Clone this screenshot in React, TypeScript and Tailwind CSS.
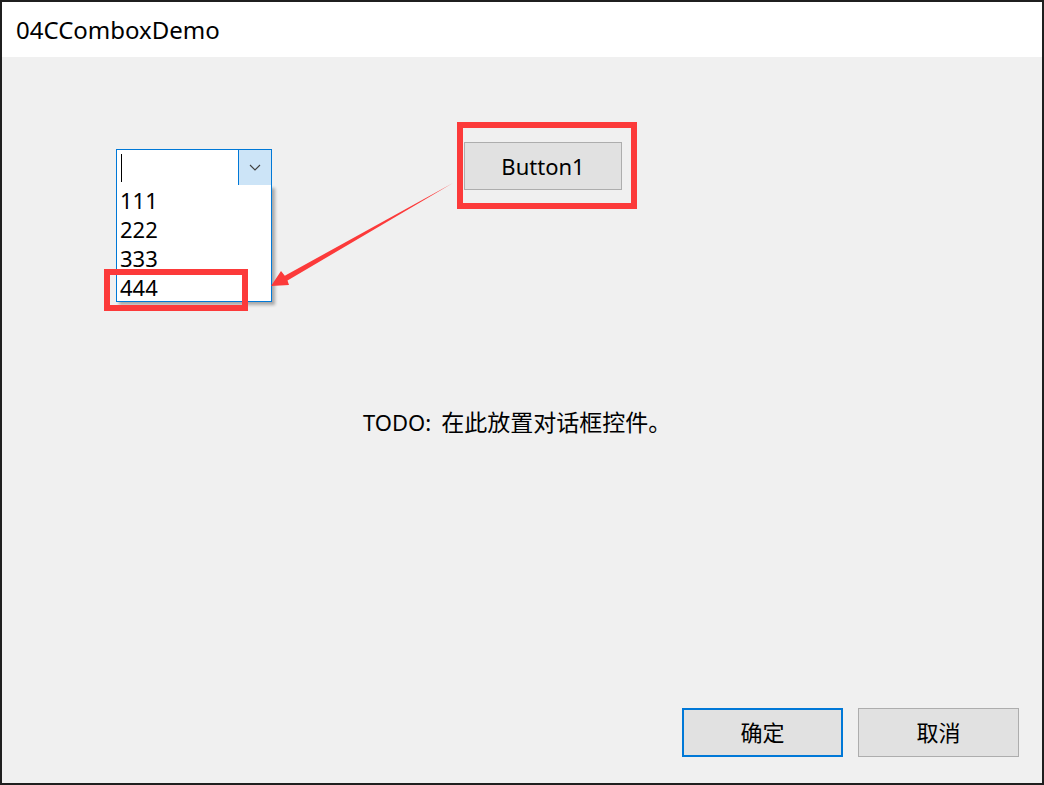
// Win32 dialog "04CComboxDemo" with open combo box and red annotations

const font = { fontFamily: '"Noto Sans", "Noto Sans CJK SC", sans-serif' };

function ComboBox() {
  return (
    <div className="relative mt-[7px] w-[156px]">
      {/* edit + drop button */}
      <div className="flex h-[37px] border border-[#0078d7] bg-white">
        <div className="flex flex-1 items-center pl-[4px]">
          <div className="h-[28px] w-px bg-black" />
        </div>
        <div className="flex w-[33px] items-center justify-center border-l border-[#0078d7] bg-[#cce4f7]">
          <svg width="12" height="7" viewBox="0 0 12 7">
            <path d="M1 1 L6 6 L11 1" fill="none" stroke="#404040" strokeWidth="1.1" />
          </svg>
        </div>
      </div>
      {/* open list */}
      <div className="absolute left-0 top-[36px] w-[156px] border border-t-0 border-[#0078d7] bg-white shadow-[3px_3px_3px_rgba(0,0,0,0.3)]">
        {['111', '222', '333', '444'].map((v) => (
          <div key={v} className="flex h-[29px] items-center pl-[3px] text-[22px] leading-none text-black">
            {v}
          </div>
        ))}
      </div>
    </div>
  );
}

export default function App() {
  return (
    <div className="relative flex h-[785px] w-[1044px] flex-col bg-[#1f1f1f] p-[2px]" style={font}>
      {/* Title bar */}
      <div className="flex h-[55px] items-center bg-white pl-[14px] text-[24px] text-black">
        04CComboxDemo
      </div>

      {/* Client area */}
      <div className="flex flex-1 flex-col bg-[#f0f0f0]">
        <div className="flex items-start pl-[114px] pt-[85px]">
          <ComboBox />
          <button className="ml-[192px] flex h-[48px] w-[158px] items-center justify-center border border-[#adadad] bg-[#e1e1e1] text-[22px] text-black">
            Button1
          </button>
        </div>

        <div className="mt-[217px] flex items-center pl-[361px] text-[22px] leading-[30px] text-black">
          <span>TODO:</span>
          <span className="ml-[10px] text-[23px]">在此放置对话框控件。</span>
        </div>

        <div className="flex-1" />

        <div className="flex justify-end gap-[15px] pb-[26px] pr-[23px]">
          <button className="flex h-[49px] w-[161px] items-center justify-center border-2 border-[#0078d7] bg-[#e1e1e1] text-[22px] text-black">
            确定
          </button>
          <button className="flex h-[49px] w-[161px] items-center justify-center border border-[#adadad] bg-[#e1e1e1] text-[22px] text-black">
            取消
          </button>
        </div>
      </div>

      {/* Annotations */}
      <div className="pointer-events-none absolute left-[457px] top-[122px] h-[87px] w-[180px] border-[6px] border-[#fc3a3a]" />
      <div className="pointer-events-none absolute left-[104px] top-[269px] h-[42px] w-[144px] border-[6px] border-[#fc3a3a]" />
      <svg className="pointer-events-none absolute left-0 top-0" width="1044" height="785">
        <polygon
          points="453,183 287.5,280.5 289,285 271,286 281,271 284.8,275.7"
          fill="#fc3a3a"
        />
      </svg>
    </div>
  );
}
